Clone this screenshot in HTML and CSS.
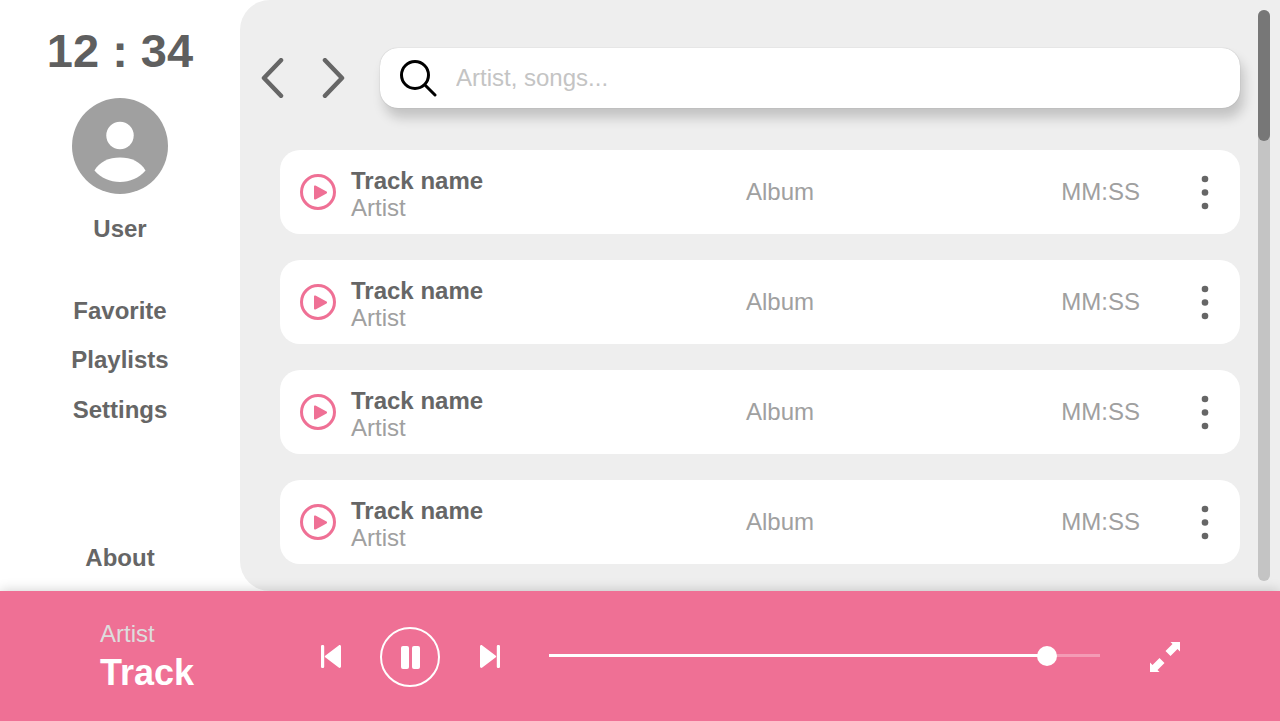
FILE: index.html
```html
<!DOCTYPE html>
<html lang="en">
<head>
    <meta charset="UTF-8">
    <meta name="viewport" content="width=device-width, initial-scale=1.0">
    <title>Music player</title>
    <link rel="stylesheet" href="styles.css">
</head>
<body>
    <svg class="sprites" width="0" height="0">
        <symbol id="play" viewBox="0 0 36 36">
            <circle cx="18" cy="18" r="16.5" fill="none" stroke="currentColor" stroke-width="3"/>
            <path d="M14 12.500a1 1 0 0 1 1.500-.9l11 6a1 1 0 0 1 0 1.800l-11 6a1 1 0 0 1-1.500-.9z" fill="currentColor"/>
        </symbol>
        <symbol id="more" viewBox="0 0 8 36">
            <circle cx="4" cy="5" r="3.300" fill="currentColor"/>
            <circle cx="4" cy="18.500" r="3.300" fill="currentColor"/>
            <circle cx="4" cy="32" r="3.300" fill="currentColor"/>
        </symbol>
        <symbol id="skip" viewBox="0 0 20 23">
            <path d="M1.200 0h.8a1.200 1.200 0 0 1 1.200 1.200v20.600A1.200 1.200 0 0 1 2 23h-.8A1.200 1.200 0 0 1 0 21.800V1.200A1.200 1.200 0 0 1 1.200 0zM20 1.500v20c0 1.200-1.300 1.900-2.300 1.100L4.500 12.600a1.400 1.400 0 0 1 0-2.200L17.700.4C18.700-.4 20 .3 20 1.500z" fill="#fff"/>
        </symbol>
    </svg>

    <section class="top">
        <aside class="sidebar">
            <div class="clock">12 : 34</div>
            <svg class="avatar" viewBox="0 0 96 96">
                <circle cx="48" cy="48" r="48" fill="#a0a0a0"/>
                <circle cx="48" cy="37.500" r="13.700" fill="#fff"/>
                <path d="M22.500 72.500C27 64 37 59.500 48 59.500S69 64 73.500 72.500C67 80 58 84 48 84S29 80 22.500 72.500z" fill="#fff"/>
            </svg>
            <div class="username">User</div>
            <nav class="menu">
                <a>Favorite</a>
                <a>Playlists</a>
                <a>Settings</a>
            </nav>
            <a class="about">About</a>
        </aside>

        <main class="content">
            <div class="toolbar">
                <svg class="arrow" viewBox="0 0 24 40"><path d="M21 2.200 4 20l17 17.800" fill="none" stroke="#666" stroke-width="4.500" stroke-linecap="round" stroke-linejoin="round"/></svg>
                <svg class="arrow" viewBox="0 0 24 40"><path d="M3 2.200 20 20 3 37.800" fill="none" stroke="#666" stroke-width="4.500" stroke-linecap="round" stroke-linejoin="round"/></svg>
                <label class="search">
                    <svg class="search-icon" viewBox="0 0 38 38">
                        <circle cx="16" cy="16" r="13.500" fill="none" stroke="#000" stroke-width="3"/>
                        <path d="M26 26l10 10" fill="none" stroke="#000" stroke-width="3" stroke-linecap="round"/>
                    </svg>
                    <input type="text" placeholder="Artist, songs...">
                </label>
            </div>

            <ul class="tracks">
                <li class="track">
                    <svg class="track-play"><use href="#play"/></svg>
                    <div class="track-info"><b>Track name</b><span>Artist</span></div>
                    <span class="track-album">Album</span>
                    <span class="track-time">MM:SS</span>
                    <svg class="track-more"><use href="#more"/></svg>
                </li>
                <li class="track">
                    <svg class="track-play"><use href="#play"/></svg>
                    <div class="track-info"><b>Track name</b><span>Artist</span></div>
                    <span class="track-album">Album</span>
                    <span class="track-time">MM:SS</span>
                    <svg class="track-more"><use href="#more"/></svg>
                </li>
                <li class="track">
                    <svg class="track-play"><use href="#play"/></svg>
                    <div class="track-info"><b>Track name</b><span>Artist</span></div>
                    <span class="track-album">Album</span>
                    <span class="track-time">MM:SS</span>
                    <svg class="track-more"><use href="#more"/></svg>
                </li>
                <li class="track">
                    <svg class="track-play"><use href="#play"/></svg>
                    <div class="track-info"><b>Track name</b><span>Artist</span></div>
                    <span class="track-album">Album</span>
                    <span class="track-time">MM:SS</span>
                    <svg class="track-more"><use href="#more"/></svg>
                </li>
            </ul>

            <div class="scrollbar"><div class="scrollbar-thumb"></div></div>
        </main>
    </section>

    <footer class="player">
        <div class="now-playing">
            <span>Artist</span>
            <b>Track</b>
        </div>
        <svg class="skip"><use href="#skip"/></svg>
        <div class="pause">
            <i></i><i></i>
        </div>
        <svg class="skip skip-next"><use href="#skip"/></svg>
        <div class="progress">
            <div class="progress-fill" style="width: 90.400%"><span class="progress-knob"></span></div>
        </div>
        <svg class="expand" viewBox="0 0 30 30">
            <path d="M30 0v9.500L27.500 7l-7 7-5-5 7-7-2-2zM0 30v-9.500L2.500 23l7-7 5 5-7 7 2 2z" fill="#fff"/>
        </svg>
    </footer>
</body>
</html>
```

FILE: styles.css
```css
*{
    padding:0;
    margin:0;
    box-sizing:border-box;
}
html,body{
    height:721px;
    overflow:hidden;
}
body{
    display:flex;
    flex-direction:column;
    background-color:#fff;
    font-family:"Liberation Sans",Arial,sans-serif;
    font-size:24px;
    line-height:28px;
}
.sprites{
    display:none;
}
.top{
    display:flex;
    height:591px;
}

/* sidebar */
.sidebar{
    width:240px;
    display:flex;
    flex-direction:column;
    align-items:center;
    padding:24px 0 19px;
    color:#666;
    font-weight:bold;
}
.clock{
    font-size:47px;
    line-height:54px;
    color:#5f5f5f;
}
.avatar{
    width:96px;
    height:96px;
    margin-top:20px;
}
.username{
    margin-top:21px;
}
.menu{
    display:flex;
    flex-direction:column;
    align-items:center;
    gap:21.500px;
    margin-top:53.750px;
}
.about{
    margin-top:auto;
}

/* main panel */
.content{
    position:relative;
    flex-grow:1;
    padding:48px 40px 0 20px;
    background-color:#eee;
    border-radius:30px 0 0 30px;
}
.toolbar{
    display:flex;
    align-items:center;
}
.arrow{
    width:24px;
    height:40px;
    margin-right:38px;
}
.arrow + .arrow{
    margin-right:34px;
}
.search{
    flex-grow:1;
    height:60px;
    display:flex;
    align-items:center;
    padding-left:19px;
    background-color:#fff;
    border-radius:18px;
    box-shadow:0 0 1px rgba(0,0,0,.3),4px 10px 12px rgba(0,0,0,.18);
}
.search-icon{
    width:38px;
    height:38px;
    flex-shrink:0;
}
.search input{
    flex-grow:1;
    margin-left:19px;
    border:none;
    outline:none;
    background:none;
    font:inherit;
}
.search input::placeholder{
    color:#c4c4c4;
    opacity:1;
}
.tracks{
    display:flex;
    flex-direction:column;
    gap:26px;
    margin:42px 0 0 20px;
    list-style:none;
}
.track{
    height:84px;
    display:flex;
    align-items:center;
    padding:0 31px 0 20px;
    background-color:#fff;
    border-radius:20px;
    color:#a0a0a0;
}
.track-play{
    width:36px;
    height:36px;
    flex-shrink:0;
    color:#ef7095;
}
.track-info{
    width:395px;
    margin-left:15px;
    padding-top:4px;
    display:flex;
    flex-direction:column;
    line-height:27px;
}
.track-info b{
    color:#666;
}
.track-time{
    margin-left:auto;
}
.track-more{
    width:8px;
    height:36px;
    margin-left:61px;
    color:#666;
}
.scrollbar{
    position:absolute;
    top:10px;
    right:10px;
    width:12px;
    height:571px;
    background-color:#c4c4c4;
    border-radius:6px;
}
.scrollbar-thumb{
    height:131px;
    background-color:#777;
    border-radius:6px;
}

/* bottom player */
.player{
    position:relative;
    height:130px;
    display:flex;
    align-items:center;
    padding:1px 0 0 100px;
    background-color:#ef7095;
    box-shadow:0 0 12px rgba(0,0,0,.2);
    color:#fff;
}
.now-playing{
    width:221px;
    padding-top:1px;
    display:flex;
    flex-direction:column;
}
.now-playing span{
    color:#ddd;
}
.now-playing b{
    margin-top:3px;
    font-size:36px;
    line-height:44px;
}
.skip{
    width:20px;
    height:23px;
}
.skip-next{
    transform:scaleX(-1);
}
.pause{
    width:60px;
    height:60px;
    margin:1px 40px 0 39px;
    display:flex;
    align-items:center;
    justify-content:center;
    gap:3px;
    border:2px solid #fff;
    border-radius:50%;
}
.pause i{
    width:8px;
    height:23px;
    background-color:#fff;
    border-radius:2px;
}
.progress{
    width:551px;
    height:3px;
    margin:0 0 2px 49px;
    background-color:rgba(255,255,255,.3);
}
.progress-fill{
    position:relative;
    height:3px;
    background-color:#fff;
}
.progress-knob{
    position:absolute;
    right:-10px;
    top:-8.500px;
    width:20px;
    height:20px;
    background-color:#fff;
    border-radius:50%;
}
.expand{
    width:30px;
    height:30px;
    margin:1px 0 0 50px;
}
```
